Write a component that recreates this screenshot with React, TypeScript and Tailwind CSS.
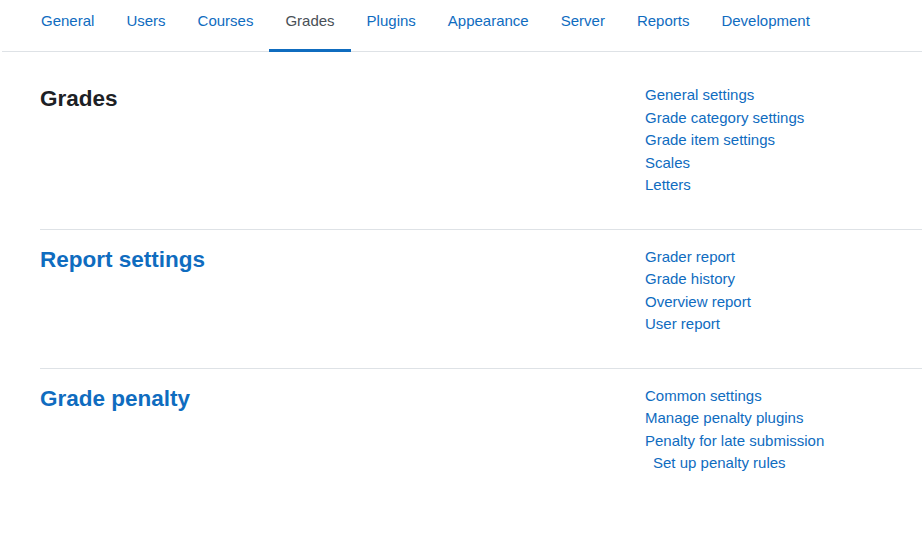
const tabs = ["General", "Users", "Courses", "Grades", "Plugins", "Appearance", "Server", "Reports", "Development"];

const sections = [
  {
    title: "Grades",
    plain: true,
    links: ["General settings", "Grade category settings", "Grade item settings", "Scales", "Letters"],
  },
  {
    title: "Report settings",
    links: ["Grader report", "Grade history", "Overview report", "User report"],
  },
  {
    title: "Grade penalty",
    links: ["Common settings", "Manage penalty plugins", "Penalty for late submission", "  Set up penalty rules"],
  },
];

export default function App() {
  return (
    <div className="min-h-[554px] bg-white font-['Liberation_Sans',Arial,sans-serif] text-[15px] text-[#1d2125]">
      <nav className="ml-[2px] flex h-[52px] border-b border-[#dee2e6] pl-[23px]">
        {tabs.map((tab) => (
          <a
            key={tab}
            href="#"
            className={
              tab === "Grades"
                ? "-mb-px flex h-[52px] items-start border-b-[3px] border-[#0f6cbf] px-4 pt-[10px] leading-[22px] text-[#495057]"
                : "-mb-px flex h-[52px] items-start px-4 pt-[10px] leading-[22px] text-[#0f6cbf]"
            }
          >
            {tab}
          </a>
        ))}
      </nav>

      <div className="pl-10 pt-[32px]">
        {sections.map((section, i) => (
          <section
            key={section.title}
            className={i === 0 ? "grid grid-cols-[605px_1fr] pb-[32px]" : "grid grid-cols-[605px_1fr] border-t border-[#dee2e6] pb-[32px] pt-[16px]"}
          >
            <h3
              className={
                section.plain
                  ? "mt-[2px] text-[22.5px] font-bold leading-[26px] text-[#1d2125]"
                  : "mt-[1px] text-[22.5px] font-bold leading-[26px] text-[#0f6cbf]"
              }
            >
              {section.title}
            </h3>
            <ul>
              {section.links.map((link) => (
                <li key={link} className="leading-[22.5px]">
                  <a href="#" className={link.startsWith(" ") ? "pl-2 text-[#0f6cbf]" : "text-[#0f6cbf]"}>
                    {link.trim()}
                  </a>
                </li>
              ))}
            </ul>
          </section>
        ))}
      </div>
    </div>
  );
}
